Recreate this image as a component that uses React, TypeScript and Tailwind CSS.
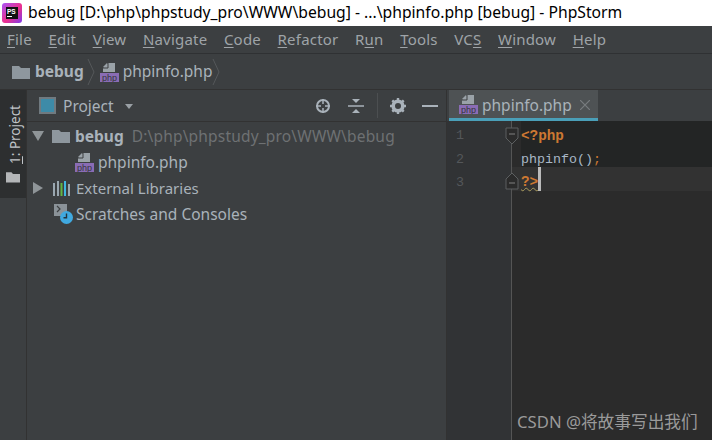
const MENU = [
  { pre: "", key: "F", post: "ile" },
  { pre: "", key: "E", post: "dit" },
  { pre: "", key: "V", post: "iew" },
  { pre: "", key: "N", post: "avigate" },
  { pre: "", key: "C", post: "ode" },
  { pre: "", key: "R", post: "efactor" },
  { pre: "R", key: "u", post: "n" },
  { pre: "", key: "T", post: "ools" },
  { pre: "VC", key: "S", post: "" },
  { pre: "", key: "W", post: "indow" },
  { pre: "", key: "H", post: "elp" },
];

function Folder({ className }: { className?: string }) {
  return (
    <svg viewBox="0 0 18 14" className={className}>
      <path d="M0 1h7l2 2h9v11H0z" fill="currentColor" />
    </svg>
  );
}

function PhpFile() {
  return (
    <svg viewBox="0 0 19 20" className="h-5 w-[19px] shrink-0">
      <path d="M3 10V6l5-5h7v9z" fill="#9aa2a8" />
      <path d="M3 5l4-4v4z" fill="#9aa2a8" />
      <path d="M8 1v5H3" fill="none" stroke="#3c3f41" />
      <rect x="0" y="11" width="19" height="9" fill="#8a6cb5" />
      <text x="9.5" y="18.5" textAnchor="middle" fontSize="9" fill="#35363a" fontFamily="Liberation Sans, sans-serif">php</text>
    </svg>
  );
}

function Chevron() {
  return (
    <svg viewBox="0 0 8 28" className="h-7 w-2 shrink-0">
      <path d="M1 1l6 13-6 13" fill="none" stroke="#55585a" />
    </svg>
  );
}

function FoldMark({ up }: { up?: boolean }) {
  return (
    <svg viewBox="0 0 14 18" className="h-[18px] w-3.5">
      <path d={up ? "M1 17V7l6-6 6 6v10z" : "M1 1v10l6 6 6-6V1z"} fill="#2b2b2b" stroke="#5c5f60" />
      <path d={up ? "M4 11h6" : "M4 7h6"} stroke="#808080" />
    </svg>
  );
}

export default function App() {
  return (
    <div className="flex h-[440px] w-[712px] flex-col overflow-hidden bg-[#3c3f41] font-['Noto_Sans',sans-serif] text-[#a9b2ba]">
      {/* title bar */}
      <div className="flex h-[26px] items-center bg-white pl-[2px] text-[15.7px] text-black">
        <svg viewBox="0 0 20 20" className="mr-[6px] h-5 w-5">
          <defs>
            <linearGradient id="ps" x1="0" y1="0" x2="1" y2="1">
              <stop offset="0" stopColor="#a855f7" />
              <stop offset="0.55" stopColor="#ec2f8c" />
              <stop offset="1" stopColor="#7c3aed" />
            </linearGradient>
          </defs>
          <rect width="20" height="20" rx="3" fill="url(#ps)" />
          <rect x="4" y="4" width="12" height="12" fill="#111" />
          <text x="5" y="11" fontSize="6.5" fontWeight="700" fill="#fff" fontFamily="Liberation Sans, sans-serif">PS</text>
          <rect x="5" y="13" width="5" height="1" fill="#fff" />
        </svg>
        <span className="whitespace-pre">bebug [D:\php\phpstudy_pro\WWW\bebug] - ...\phpinfo.php [bebug] - PhpStorm</span>
      </div>

      {/* menu bar */}
      <div className="flex h-[28px] items-center gap-[16.6px] border-b border-[#2f3133] pl-[7px] text-[15px] tracking-[0.2px] text-[#9fa4a8]">
        {MENU.map((m) => (
          <span key={m.key + m.post} className="whitespace-pre">
            {m.pre}
            <span className="underline underline-offset-2">{m.key}</span>
            {m.post}
          </span>
        ))}
      </div>

      {/* breadcrumbs */}
      <div className="flex h-[36px] items-center border-b border-[#323232] pl-[12px] text-[15.5px]">
        <Folder className="h-[14px] w-[18px] text-[#8e979e]" />
        <span className="ml-[5px] font-bold text-[#a9b2ba]">bebug</span>
        <span className="ml-[3px]"><Chevron /></span>
        <span className="ml-[5px]"><PhpFile /></span>
        <span className="ml-[4px]">phpinfo.php</span>
        <Chevron />
      </div>

      <div className="flex min-h-0 flex-1">
        {/* tool window strip */}
        <div className="w-[27px] shrink-0 border-r border-[#323232]">
          <div className="flex h-[108px] flex-col items-center justify-end gap-[7px] bg-[#2d2f30] pb-[15px] pl-[4px] text-[#c0c4c8]">
            <span className="whitespace-pre text-[13.5px] [writing-mode:vertical-rl] rotate-180">
              <span className="underline">1</span>: Project
            </span>
            <Folder className="mr-[4px] h-[12px] w-[14px] text-[#b4b6b8]" />
          </div>
        </div>

        {/* project panel */}
        <div className="flex w-[420px] shrink-0 flex-col border-r border-[#323232]">
          <div className="flex h-[32px] shrink-0 items-center border-b border-[#323232] pl-[12px] text-[15.5px]">
            <span className="h-[17px] w-[17px] border-2 border-[#707a80] bg-[#3d8ba8]" />
            <span className="ml-[7px] pt-[2px]">Project</span>
            <svg viewBox="0 0 8 5" className="ml-[11px] mt-[1px] h-[5px] w-2">
              <path d="M0 0h8L4 5z" fill="#9aa0a5" />
            </svg>
            <div className="ml-auto flex items-center pr-[8px]">
              <svg viewBox="0 0 16 16" className="h-4 w-4 text-[#a9b2ba]">
                <circle cx="8" cy="8" r="6" fill="none" stroke="currentColor" strokeWidth="2" />
                <path d="M8 1v5M8 10v5M1 8h5M10 8h5" stroke="currentColor" strokeWidth="1.5" />
              </svg>
              <svg viewBox="0 0 16 16" className="ml-[17px] h-4 w-4">
                <path d="M0 8h16" stroke="#a9b2ba" strokeWidth="1.5" />
                <path d="M4 1h8L8 5zM4 15h8l-4-4z" fill="#a9b2ba" />
              </svg>
              <span className="ml-[13px] h-[25px] w-px bg-[#4c4f51]" />
              <svg viewBox="0 0 16 16" className="ml-[12px] h-4 w-4">
                <circle cx="8" cy="8" r="4.8" fill="none" stroke="#a9b2ba" strokeWidth="3.6" />
                <path d="M8 0v3M8 13v3M0 8h3M13 8h3M2.3 2.3l2 2M11.7 11.7l2 2M13.7 2.3l-2 2M4.3 11.7l-2 2" stroke="#a9b2ba" strokeWidth="2.4" />
              </svg>
              <span className="ml-[16px] h-[2px] w-[16px] bg-[#a9b2ba]" />
            </div>
          </div>

          <div className="flex flex-col pt-px text-[15.5px] leading-[26px]">
            <div className="flex h-[26px] items-center pl-[5px]">
              <svg viewBox="0 0 12 12" className="h-3 w-3"><path d="M0 1h12L6 11z" fill="#8f9598" /></svg>
              <Folder className="ml-[8px] h-[14px] w-[18px] text-[#8e979e]" />
              <span className="ml-[5px] font-bold">bebug</span>
              <span className="ml-[8px] tracking-[0.18px] text-[#6e7173]">D:\php\phpstudy_pro\WWW\bebug</span>
            </div>
            <div className="flex h-[26px] items-center pl-[48px]">
              <PhpFile />
              <span className="ml-[4px]">phpinfo.php</span>
            </div>
            <div className="flex h-[26px] items-center pl-[5px]">
              <svg viewBox="0 0 12 12" className="h-3 w-3"><path d="M1 0l10 6-10 6z" fill="#8f9598" /></svg>
              <svg viewBox="0 0 18 16" className="ml-[9px] h-4 w-[18px]">
                <path d="M1 3v13M16 4v12" stroke="#9aa7b0" strokeWidth="2" />
                <path d="M5 1v15" stroke="#9aa7b0" strokeWidth="2" />
                <path d="M8.5 3v13" stroke="#62b543" strokeWidth="2" />
                <path d="M12 1v15" stroke="#40b6e0" strokeWidth="2" />
              </svg>
              <span className="ml-[5px] text-[15px]">External Libraries</span>
            </div>
            <div className="flex h-[26px] items-center pl-[26px]">
              <svg viewBox="0 0 20 20" className="h-5 w-5 shrink-0">
                <rect x="1" y="0" width="13" height="12" fill="#8a9298" />
                <path d="M4 2l3 3-3 3" fill="none" stroke="#3c3f41" strokeWidth="1.2" />
                <circle cx="13.5" cy="13.5" r="6.5" fill="#40a9e0" />
                <path d="M13.5 9.5v4.2h-3" fill="none" stroke="#23343e" strokeWidth="1.4" />
              </svg>
              <span className="ml-[3px]">Scratches and Consoles</span>
            </div>
          </div>
        </div>

        {/* editor */}
        <div className="relative flex min-w-0 flex-1 flex-col bg-[#2b2b2b]">
          <div className="flex h-[31px] shrink-0 bg-[#3c3f41] pl-[2px]">
            <div className="flex w-[149px] items-center border-b-[3px] border-[#4a9fb8] bg-[#4e5254] pl-[10px] text-[15.5px]">
              <PhpFile />
              <span className="ml-[4px] pt-[4px]">phpinfo.php</span>
              <span className="ml-[8px] pt-[2px] text-[#787c7f]">
                <svg viewBox="0 0 10 10" className="h-[10px] w-[10px]"><path d="M0 0l10 10M10 0L0 10" stroke="currentColor" strokeWidth="1.2" /></svg>
              </span>
            </div>
          </div>
          <div className="flex min-h-0 flex-1 font-['Liberation_Mono',monospace] text-[13.33px]">
            <div className="w-[65px] shrink-0 border-r border-[#555] bg-[#313335] pl-[9px] text-[#54575a]">
              <div className="h-[23px] pt-[5px]">1</div>
              <div className="h-[23px] pt-[6px]">2</div>
              <div className="h-[24px] pt-[6px]">3</div>
            </div>
            <div className="min-w-0 flex-1">
              <div className="h-[23px] pl-[9px]">
                <div className="h-full bg-[#232525] pt-[5px] text-[14.3px] font-bold text-[#cc7832]">&lt;?php</div>
              </div>
              <div className="h-[23px] pl-[9px]">
                <div className="h-full bg-[#232525] pt-[6px] text-[#a9b7c6]">
                  phpinfo()<span className="text-[#cc7832]">;</span>
                </div>
              </div>
              <div className="flex h-[24px] items-start bg-[#323232] pl-[9px] text-[14.3px] font-bold text-[#cc7832]">
                <span className="mt-[5px] underline decoration-wavy decoration-[#a89a5c] decoration-1 underline-offset-1">?&gt;</span>
                <span className="h-[24px] w-[3px] bg-[#bbbbbb]" />
              </div>
            </div>
          </div>
          <span className="absolute left-[58px] top-[37px]"><FoldMark /></span>
          <span className="absolute left-[58px] top-[82px]"><FoldMark up /></span>
          <span className="absolute left-[70px] top-[319px] whitespace-pre font-['Noto_Sans','Noto_Sans_CJK_SC',sans-serif] text-[16.7px] text-[#9a9a9a]">CSDN @将故事写出我们</span>
        </div>
      </div>
    </div>
  );
}
